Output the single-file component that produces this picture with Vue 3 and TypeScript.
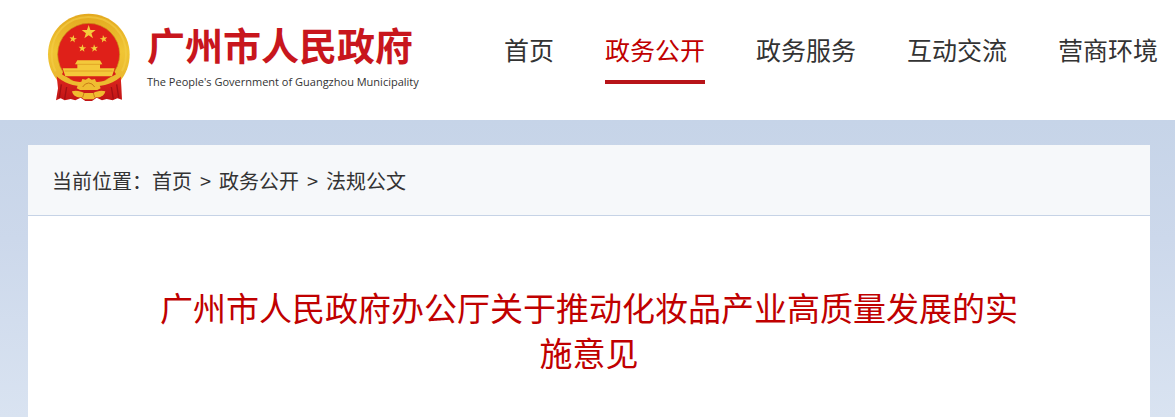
<script setup lang="ts">
interface NavItem {
  label: string
  active?: boolean
}

const navItems: NavItem[] = [
  { label: '首页' },
  { label: '政务公开', active: true },
  { label: '政务服务' },
  { label: '互动交流' },
  { label: '营商环境' },
]

const crumbs: string[] = ['首页', '政务公开', '法规公文']

const star = (cx: number, cy: number, r: number, turn = 0): string =>
  Array.from({ length: 10 }, (_, i) => {
    const radius = i % 2 === 0 ? r : r * 0.4
    const angle = ((i * 36 - 90 + turn) * Math.PI) / 180
    return `${(cx + radius * Math.cos(angle)).toFixed(1)},${(cy + radius * Math.sin(angle)).toFixed(1)}`
  }).join(' ')

const stars: string[] = [
  star(146, 82, 22),
  star(99, 102, 12, 10),
  star(191, 102, 12, -10),
  star(127, 130, 12, 5),
  star(163, 130, 12, -5),
]
</script>

<template>
  <div class="page">
    <header class="header">
      <a class="brand" href="#">
        <svg class="emblem" viewBox="21 24 252 264" aria-hidden="true">
          <defs>
            <linearGradient id="gold" x1="0" y1="0" x2="0" y2="1">
              <stop offset="0" stop-color="#e3a91f" />
              <stop offset="0.5" stop-color="#f0c534" />
              <stop offset="1" stop-color="#e8b42a" />
            </linearGradient>
            <linearGradient id="drape" x1="0" y1="0" x2="0" y2="1">
              <stop offset="0" stop-color="#de261e" />
              <stop offset="1" stop-color="#c01416" />
            </linearGradient>
          </defs>
          <path
            d="M146 26C78 26 24 80 24 148c0 32 12 60 31 82l24 20h134l26-20c19-22 30-50 30-82C269 80 214 26 146 26Z"
            fill="url(#gold)"
          />
          <path
            d="M146 36C82 36 35 84 35 148c0 30 10 54 26 72M146 36c64 0 112 48 112 112 0 30-11 54-27 72"
            fill="none"
            stroke="#f4cd48"
            stroke-width="6"
            stroke-opacity="0.6"
          />
          <circle cx="146" cy="148" r="93" fill="#df2019" stroke="#c98f17" stroke-width="2" />
          <polygon v-for="points in stars" :key="points" :points="points" fill="#f5ca3c" />
          <path
            d="M50 212c16 16 40 24 68 24h58c28 0 50-8 66-24l2 32 2 40-14-4-14 6-18-4-14 4-16-8-14 10h-20l-14-10-16 8-14-4-18 4-12-6-14 6 6-36Z"
            fill="url(#drape)"
          />
          <path
            d="M64 238l-6 40M80 246l-6 36M214 246l6 36M230 238l6 40"
            fill="none"
            stroke="#a01014"
            stroke-width="4"
          />
          <path
            d="M46 200c18 24 42 36 78 38M248 200c-18 24-42 36-80 38"
            fill="none"
            stroke="#ecba30"
            stroke-width="12"
          />
          <path
            d="M66 208c14 10 32 17 58 18h44c26-1 44-8 60-18l-12-20H76Z"
            fill="#d81e19"
          />
          <path
            d="M112 166h68l7 12h-7v12h44l-8 24H76l-8-24h44v-12h-7Z"
            fill="#f4c83a"
          />
          <path d="M110 178h74M74 198h144" stroke="#d9951d" stroke-width="2" />
          <path
            d="M113 242l2-10 9-2 3-8 10 2 9-6 9 6 10-2 3 8 9 2 2 10 3 8-10 5h-52l-10-5Z"
            fill="#efbc31"
          />
          <path
            d="M128 246l8-9 10-3 10 3 8 9"
            fill="none"
            stroke="#c87917"
            stroke-width="3"
          />
          <path
            d="M96 259c14-4 26 0 36 5h28c10-5 22-9 36-5-2 12-14 20-28 18l-8 6h-28l-8-6c-14 2-26-6-28-18Z"
            fill="#f0bb30"
          />
          <path
            d="M132 264l-4 13M160 264l4 13"
            fill="none"
            stroke="#c97d1a"
            stroke-width="3"
          />
        </svg>
        <span class="brand-text">
          <strong class="brand-name">广州市人民政府</strong>
          <span class="brand-sub">The People's Government of Guangzhou Municipality</span>
        </span>
      </a>
      <nav class="nav" aria-label="主导航">
        <a
          v-for="item in navItems"
          :key="item.label"
          class="nav-link"
          :class="{ active: item.active }"
          :aria-current="item.active ? 'page' : undefined"
          href="#"
          >{{ item.label }}</a
        >
      </nav>
    </header>

    <main class="body">
      <article class="panel">
        <nav class="crumbs" aria-label="当前位置">
          <span>当前位置：</span>
          <template v-for="(crumb, index) in crumbs" :key="crumb">
            <span v-if="index > 0" class="separator">&gt;</span>
            <a href="#">{{ crumb }}</a>
          </template>
        </nav>
        <h1 class="title">广州市人民政府办公厅关于推动化妆品产业高质量发展的实施意见</h1>
      </article>
    </main>
  </div>
</template>

<style>
body {
  margin: 0;
}
</style>

<style scoped>
.page {
  display: flex;
  flex-direction: column;
  min-height: 100vh;
  box-sizing: border-box;
  color: #333;
  background: #fff;
  font-family: "Noto Sans CJK SC", sans-serif;
}

a {
  color: inherit;
  text-decoration: none;
}

.header {
  display: flex;
  justify-content: space-between;
  align-items: flex-start;
  min-height: 120px;
  box-sizing: border-box;
  padding: 13px 17px 0 47px;
}

.brand {
  display: flex;
  gap: 16px;
}

.emblem {
  width: 84px;
  height: 88px;
}

.brand-text {
  display: flex;
  flex-direction: column;
  padding-top: 8px;
  white-space: nowrap;
}

.brand-name {
  color: #c8161d;
  font-size: 38px;
  font-weight: 700;
  line-height: 46px;
}

.brand-sub {
  color: #333;
  font-family: "Open Sans", "Noto Sans", sans-serif;
  font-size: 11px;
  font-weight: 500;
  line-height: 30px;
}

.nav {
  display: flex;
  gap: 51px;
  padding-top: 16px;
}

.nav-link {
  padding-bottom: 11px;
  border-bottom: 4px solid transparent;
  font-size: 25px;
  line-height: 40px;
  white-space: nowrap;
}

.nav-link.active {
  border-color: #b81419;
  color: #c00000;
}

.body {
  display: flex;
  flex: 1;
  padding: 25px 25px 0 28px;
  background: linear-gradient(#c6d4e8, #ccd8eb 40%, #d9e3f1);
}

.panel {
  flex: 1;
  background: #fff;
}

.crumbs {
  display: flex;
  align-items: center;
  padding: 21px 24px 19px;
  border-bottom: 1px solid #c6d3e6;
  background: #f6f8fa;
  font-size: 20px;
  line-height: 30px;
}

.separator {
  width: 27px;
  text-align: center;
}

.title {
  margin: 0;
  padding: 69px 130px 40px;
  color: #c00000;
  font-size: 33px;
  font-weight: 400;
  line-height: 45px;
  text-align: center;
}
</style>
